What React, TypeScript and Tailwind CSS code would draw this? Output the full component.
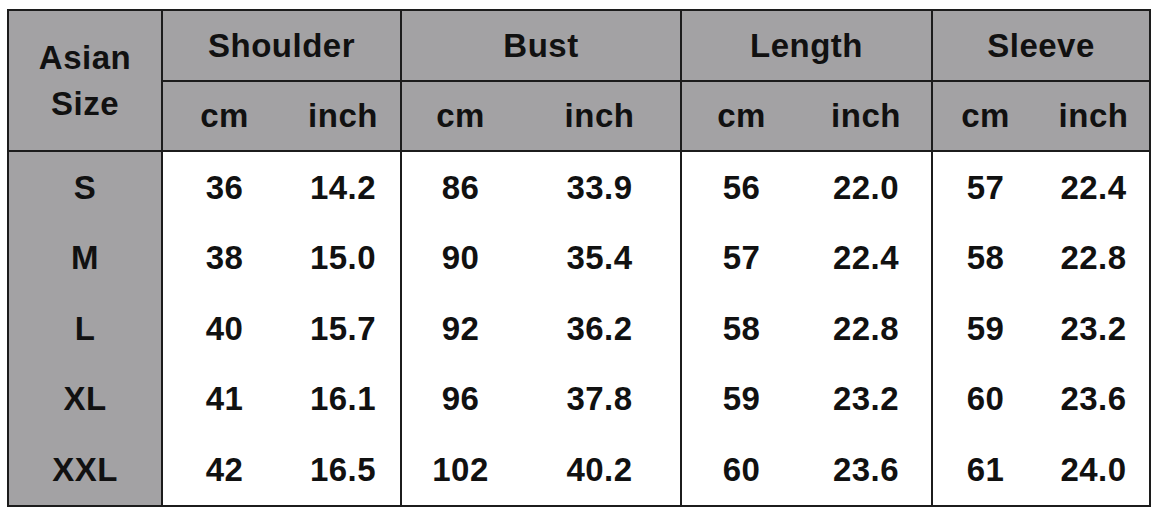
import React from "react";

type Group = { name: string; w: string; cmW: string; last?: boolean };

const groups: Group[] = [
  { name: "Shoulder", w: "w-[239px]", cmW: "w-[123px]" },
  { name: "Bust", w: "w-[280px]", cmW: "w-[117px]" },
  { name: "Length", w: "w-[251px]", cmW: "w-[119px]" },
  { name: "Sleeve", w: "w-[216px]", cmW: "w-[105px]", last: true },
];

const sizes = ["S", "M", "L", "XL", "XXL"];
const rowH = ["h-[71px]", "h-[70px]", "h-[71px]", "h-[70px]", "h-[71px]"];

const data: string[][][] = [
  // Shoulder
  [
    ["36", "38", "40", "41", "42"],
    ["14.2", "15.0", "15.7", "16.1", "16.5"],
  ],
  // Bust
  [
    ["86", "90", "92", "96", "102"],
    ["33.9", "35.4", "36.2", "37.8", "40.2"],
  ],
  // Length
  [
    ["56", "57", "58", "59", "60"],
    ["22.0", "22.4", "22.8", "23.2", "23.6"],
  ],
  // Sleeve
  [
    ["57", "58", "59", "60", "61"],
    ["22.4", "22.8", "23.2", "23.6", "24.0"],
  ],
];

function SubCol({ label, values, className }: { label: string; values: string[]; className: string }) {
  return (
    <div className={"flex flex-col " + className}>
      <div className="h-[70px] bg-[#a3a2a4] border-b-2 border-[#1c1c1c] flex items-center justify-center">
        {label}
      </div>
      {values.map((v, i) => (
        <div key={i} className={rowH[i] + " flex items-center justify-center bg-white"}>
          {v}
        </div>
      ))}
    </div>
  );
}

export default function App() {
  return (
    <div
      className="w-[1160px] h-[516px] bg-white overflow-hidden pt-[9px] pl-[7px] text-[#111] font-bold text-[33px] tracking-[0.5px]"
      style={{ fontFamily: '"Liberation Sans", Arial, sans-serif' }}
    >
      <div className="flex w-[1144px] border-2 border-[#1c1c1c]">
        {/* Size column */}
        <div className="w-[154px] flex flex-col border-r-2 border-[#1c1c1c] bg-[#a3a2a4]">
          <div className="h-[141px] border-b-2 border-[#1c1c1c] flex flex-col items-center justify-center leading-[46px]">
            <span>Asian</span>
            <span>Size</span>
          </div>
          {sizes.map((s, i) => (
            <div key={s} className={rowH[i] + " flex items-center justify-center"}>
              {s}
            </div>
          ))}
        </div>
        {groups.map((g, gi) => (
          <div
            key={g.name}
            className={"flex flex-col " + g.w + (g.last ? "" : " border-r-2 border-[#1c1c1c]")}
          >
            <div className="h-[71px] bg-[#a3a2a4] border-b-2 border-[#1c1c1c] flex items-center justify-center">
              {g.name}
            </div>
            <div className="flex">
              <SubCol label="cm" values={data[gi][0]} className={g.cmW} />
              <SubCol label="inch" values={data[gi][1]} className="flex-1" />
            </div>
          </div>
        ))}
      </div>
    </div>
  );
}
